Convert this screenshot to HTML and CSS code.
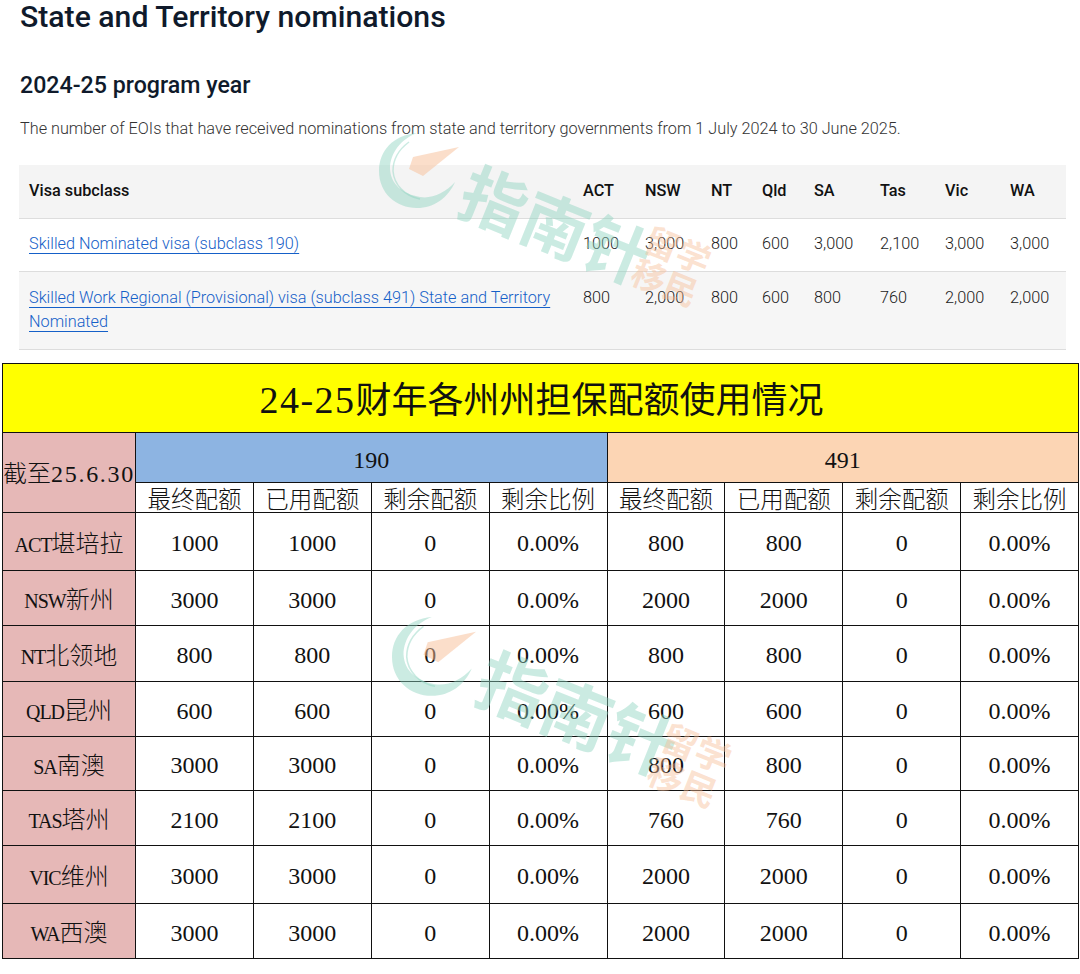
FILE: index.html
```html
<!DOCTYPE html>
<html lang="zh-CN">
<head>
    <meta charset="UTF-8">
    <meta name="viewport" content="width=device-width, initial-scale=1.0">
    <title>State and Territory nominations</title>
    <link rel="stylesheet" href="styles.css">
</head>
<body>

<div class="page">
    <!-- Web page part -->
    <section class="intro">
        <h1>State and Territory nominations</h1>
        <h2>2024-25 program year</h2>
        <p>The number of EOIs that have received nominations from state and territory governments from 1 July 2024 to 30 June 2025.</p>

        <table class="visa-table">
            <colgroup>
                <col class="col-visa"><col class="col-act"><col class="col-nsw"><col class="col-nt"><col class="col-qld">
                <col class="col-sa"><col class="col-tas"><col class="col-vic"><col class="col-wa">
            </colgroup>
            <thead>
                <tr>
                    <th>Visa subclass</th><th>ACT</th><th>NSW</th><th>NT</th><th>Qld</th><th>SA</th><th>Tas</th><th>Vic</th><th>WA</th>
                </tr>
            </thead>
            <tbody>
                <tr class="row-one">
                    <td><a href="#">Skilled Nominated visa (subclass 190)</a></td>
                    <td>1000</td><td>3,000</td><td>800</td><td>600</td><td>3,000</td><td>2,100</td><td>3,000</td><td>3,000</td>
                </tr>
                <tr class="row-two">
                    <td><a href="#">Skilled Work Regional (Provisional) visa (subclass 491) State and Territory Nominated</a></td>
                    <td>800</td><td>2,000</td><td>800</td><td>600</td><td>800</td><td>760</td><td>2,000</td><td>2,000</td>
                </tr>
            </tbody>
        </table>
    </section>

    <!-- Spreadsheet part -->
    <table class="quota-table">
        <colgroup>
            <col class="col-state">
            <col class="col-num"><col class="col-num"><col class="col-num"><col class="col-num">
            <col class="col-num"><col class="col-num"><col class="col-num"><col class="col-num">
        </colgroup>
        <tr class="h-title">
            <td colspan="9" class="title"><span class="title-text">24-25<span class="cn">财年各州州担保配额使用情况</span></span></td>
        </tr>
        <tr class="h-group">
            <td rowspan="2" class="state as-of"><span class="cn">截至</span>25.6.30</td>
            <td colspan="4" class="group-190">190</td>
            <td colspan="4" class="group-491">491</td>
        </tr>
        <tr class="h-heads">
            <td class="cn">最终配额</td><td class="cn">已用配额</td><td class="cn">剩余配额</td><td class="cn">剩余比例</td>
            <td class="cn">最终配额</td><td class="cn">已用配额</td><td class="cn">剩余配额</td><td class="cn">剩余比例</td>
        </tr>
        <tr class="h-58">
            <td class="state">ACT<span class="cn">堪培拉</span></td>
            <td>1000</td><td>1000</td><td>0</td><td>0.00%</td><td>800</td><td>800</td><td>0</td><td>0.00%</td>
        </tr>
        <tr class="h-55">
            <td class="state">NSW<span class="cn">新州</span></td>
            <td>3000</td><td>3000</td><td>0</td><td>0.00%</td><td>2000</td><td>2000</td><td>0</td><td>0.00%</td>
        </tr>
        <tr class="h-56">
            <td class="state">NT<span class="cn">北领地</span></td>
            <td>800</td><td>800</td><td>0</td><td>0.00%</td><td>800</td><td>800</td><td>0</td><td>0.00%</td>
        </tr>
        <tr class="h-55">
            <td class="state">QLD<span class="cn">昆州</span></td>
            <td>600</td><td>600</td><td>0</td><td>0.00%</td><td>600</td><td>600</td><td>0</td><td>0.00%</td>
        </tr>
        <tr class="h-54">
            <td class="state">SA<span class="cn">南澳</span></td>
            <td>3000</td><td>3000</td><td>0</td><td>0.00%</td><td>800</td><td>800</td><td>0</td><td>0.00%</td>
        </tr>
        <tr class="h-55">
            <td class="state">TAS<span class="cn">塔州</span></td>
            <td>2100</td><td>2100</td><td>0</td><td>0.00%</td><td>760</td><td>760</td><td>0</td><td>0.00%</td>
        </tr>
        <tr class="h-58">
            <td class="state">VIC<span class="cn">维州</span></td>
            <td>3000</td><td>3000</td><td>0</td><td>0.00%</td><td>2000</td><td>2000</td><td>0</td><td>0.00%</td>
        </tr>
        <tr class="h-55">
            <td class="state">WA<span class="cn">西澳</span></td>
            <td>3000</td><td>3000</td><td>0</td><td>0.00%</td><td>2000</td><td>2000</td><td>0</td><td>0.00%</td>
        </tr>
    </table>

    <!-- Watermarks lying over both tables -->
    <div class="watermark mark-top">
        <svg class="mark-logo" width="90" height="80" viewBox="0 0 90 80">
            <path class="mark-moon" d="M38 0C14 2 0 18 0 38C0 60 17 75 38 75C55 75 69 65 76 49C66 60 53 66 41 64C24 61 12 52 11 36C11 20 22 6 38 0Z"/>
            <path class="mark-line" d="M30 9C19 17 14 27 14 38C15 52 26 63 41 66"/>
            <path class="mark-arrow" d="M80 14L34 24L30 36L44 43Z"/>
        </svg>
        <span class="mark-name">指南针</span>
        <span class="mark-sub">留学<br>移民</span>
    </div>
    <div class="watermark mark-bottom">
        <svg class="mark-logo" width="90" height="80" viewBox="0 0 90 80">
            <path class="mark-moon" d="M38 0C14 2 0 18 0 38C0 60 17 75 38 75C55 75 69 65 76 49C66 60 53 66 41 64C24 61 12 52 11 36C11 20 22 6 38 0Z"/>
            <path class="mark-line" d="M30 9C19 17 14 27 14 38C15 52 26 63 41 66"/>
            <path class="mark-arrow" d="M80 14L34 24L30 36L44 43Z"/>
        </svg>
        <span class="mark-name">指南针</span>
        <span class="mark-sub">留学<br>移民</span>
    </div>
</div>

</body>
</html>
```

FILE: styles.css
```css
body {
    margin: 0;
    background-color: #fff;
    font-family: Roboto, "Noto Sans CJK SC", sans-serif;
    color: #1a1a1a;
}
.page {
    position: relative;
    height: 974px;
    overflow: hidden;
}

/* web page part */
.intro {
    padding: 0 14px 0 19px;
    height: 363px;
    box-sizing: border-box;
}
.intro h1 {
    margin: 0 0 0 1px;
    font-size: 30.2px;
    line-height: 34px;
    font-weight: 500;
    color: #0f1a2b;
}
.intro h2 {
    margin: 36px 0 0 1px;
    font-size: 23.2px;
    line-height: 30px;
    font-weight: 500;
    color: #0f1a2b;
}
.intro p {
    margin: 17px 0 0 1px;
    font-size: 16.25px;
    line-height: 24px;
    font-weight: 300;
    color: #333;
}
.visa-table {
    margin-top: 24px;
    width: 1047px;
    table-layout: fixed;
    border-collapse: collapse;
    font-size: 16.25px;
}
.col-visa { width: 554px; }
.col-act { width: 62px; }
.col-nsw { width: 66px; }
.col-nt { width: 51px; }
.col-qld { width: 52px; }
.col-sa { width: 66px; }
.col-tas { width: 65px; }
.col-vic { width: 65px; }
.col-wa { width: 66px; }
.visa-table th {
    height: 53px;
    padding: 0 0 1px 10px;
    box-sizing: border-box;
    text-align: left;
    font-weight: 500;
    background-color: #f4f4f4;
    border-bottom: 1px solid #ddd;
    color: #111;
}
.visa-table td {
    padding: 13px 0 0 10px;
    vertical-align: top;
    font-weight: 300;
    line-height: 24px;
    border-bottom: 1px solid #ddd;
    white-space: nowrap;
}
.visa-table td:first-child {
    white-space: normal;
    padding-right: 10px;
}
.row-one td { height: 39px; }
.row-two td {
    height: 63px;
    padding-top: 14px;
    background-color: #f6f6f6;
}
.visa-table a {
    color: #1560c8;
    text-decoration: underline;
    text-decoration-thickness: 1px;
    text-underline-offset: 4px;
}

/* spreadsheet part */
.quota-table {
    margin-left: 2px;
    width: 1076px;
    table-layout: fixed;
    border-collapse: collapse;
    font-family: "Liberation Serif", "Noto Sans CJK SC", serif;
    font-size: 24px;
    line-height: 24px;
    color: #111;
}
.col-state { width: 133px; }
.col-num { width: 117.875px; }
.quota-table td {
    padding: 3px 0 0;
    border: 1.5px solid #111;
    text-align: center;
    white-space: nowrap;
}
.quota-table .cn {
    font-family: "Noto Sans CJK SC", sans-serif;
    font-size: 23.5px;
    line-height: 24px;
    font-weight: 300;
    letter-spacing: 0;
}
.quota-table .h-heads td {
    padding-top: 1px;
}
.h-title { height: 69px; }
.h-group { height: 50px; }
.h-heads { height: 30px; }
.h-58 { height: 58px; }
.h-56 { height: 56px; }
.h-55 { height: 55px; }
.h-54 { height: 54px; }
.quota-table .title {
    background-color: #ffff00;
    padding: 6px 0 0 2px;
}
.title-text {
    font-size: 38px;
    letter-spacing: 1.5px;
}
.quota-table .title-text .cn {
    font-size: 36px;
    font-weight: 400;
}
.quota-table .state {
    background-color: #e6b8b7;
    font-size: 20px;
    letter-spacing: -1px;
}
.quota-table .state .cn {
    font-size: 24px;
}
.quota-table .as-of {
    padding: 0;
    overflow: hidden;
    font-size: 24px;
    letter-spacing: 1.7px;
}
.quota-table .group-190 {
    background-color: #8db4e2;
    padding-top: 4px;
}
.quota-table .group-491 {
    background-color: #fcd5b4;
    padding-top: 4px;
}

/* watermark */
.watermark {
    position: absolute;
    width: 360px;
    height: 180px;
    pointer-events: none;
}
.mark-top {
    left: 379px;
    top: 133px;
}
.mark-bottom {
    left: 392px;
    top: 617px;
    transform: scale(1.05);
    transform-origin: 0 0;
}
.mark-logo {
    position: absolute;
    left: 0;
    top: 0;
}
.mark-moon { fill: rgba(140, 210, 190, 0.45); }
.mark-line {
    fill: none;
    stroke: rgba(140, 210, 190, 0.45);
    stroke-width: 1.5;
}
.mark-arrow { fill: rgba(248, 190, 150, 0.5); }
.mark-name {
    position: absolute;
    left: 79px;
    top: 54px;
    width: 198px;
    font-family: "Noto Sans CJK SC", sans-serif;
    font-size: 66px;
    line-height: 70px;
    font-weight: 700;
    white-space: nowrap;
    color: rgba(140, 210, 190, 0.45);
    transform: rotate(22deg);
}
.mark-sub {
    position: absolute;
    left: 259px;
    top: 97px;
    width: 68px;
    font-family: "Noto Sans CJK SC", sans-serif;
    font-size: 34px;
    line-height: 35px;
    font-weight: 700;
    color: rgba(248, 190, 150, 0.45);
    transform: rotate(22deg);
}
.mark-bottom .mark-sub {
    left: 250px;
    top: 105px;
}
```
